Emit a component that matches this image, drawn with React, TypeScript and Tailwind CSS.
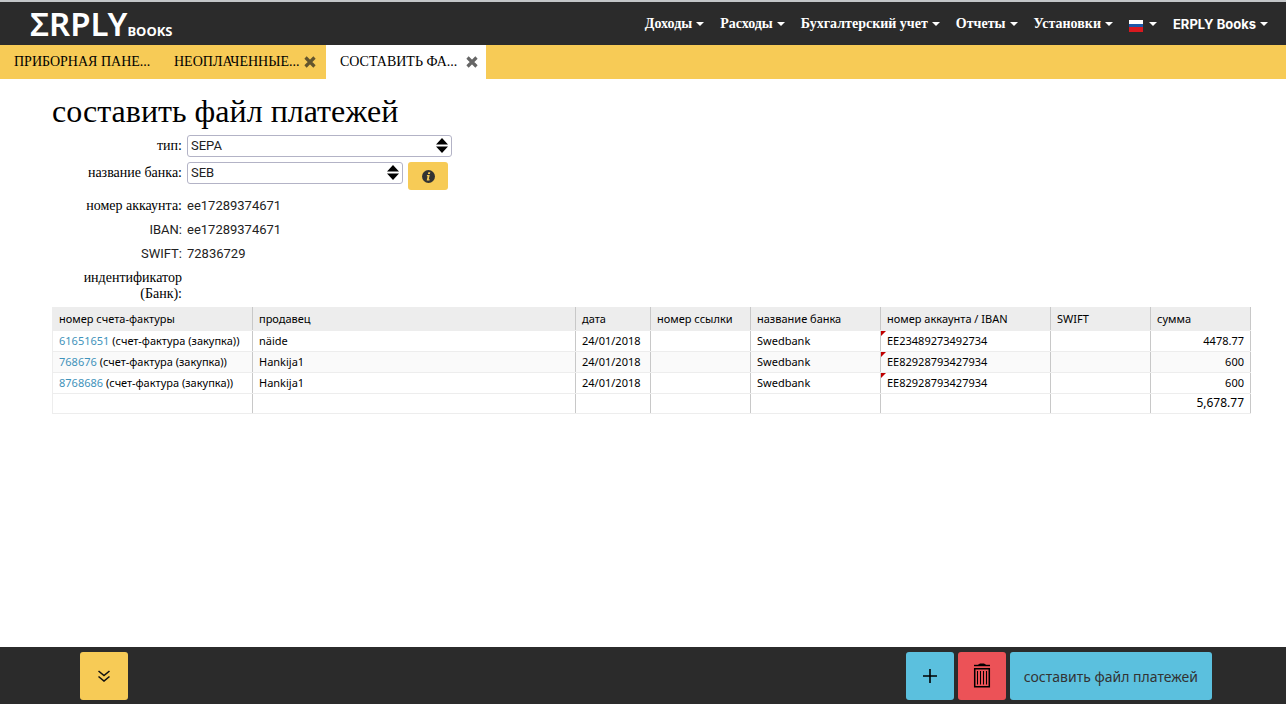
import type { ReactNode } from "react";

const menuItems = ["Доходы", "Расходы", "Бухгалтерский учет", "Отчеты", "Установки"];

const columns = [
  { title: "номер счета-фактуры", width: "w-[200px]" },
  { title: "продавец", width: "w-auto" },
  { title: "дата", width: "w-[75px]" },
  { title: "номер ссылки", width: "w-[100px]" },
  { title: "название банка", width: "w-[130px]" },
  { title: "номер аккаунта / IBAN", width: "w-[170px]" },
  { title: "SWIFT", width: "w-[100px]" },
  { title: "сумма", width: "w-[100px]" },
];

const invoices = [
  { number: "61651651", vendor: "näide", date: "24/01/2018", bank: "Swedbank", iban: "EE23489273492734", sum: "4478.77" },
  { number: "768676", vendor: "Hankija1", date: "24/01/2018", bank: "Swedbank", iban: "EE82928793427934", sum: "600" },
  { number: "8768686", vendor: "Hankija1", date: "24/01/2018", bank: "Swedbank", iban: "EE82928793427934", sum: "600" },
];

const cell = "border-r border-r-[#c8c8c8] border-b border-b-[#ededed] px-1.5";

function Caret() {
  return (
    <svg width="8" height="4" viewBox="0 0 8 4" className="mt-px" aria-hidden="true">
      <path d="M0 0h8L4 4z" fill="currentColor" />
    </svg>
  );
}

function CloseIcon() {
  return (
    <svg width="12" height="12" viewBox="0 0 12 12" aria-hidden="true">
      <path d="M1.5 1.5l9 9M10.5 1.5l-9 9" stroke="currentColor" strokeWidth="3.2" />
    </svg>
  );
}

function Flag() {
  return (
    <svg width="14" height="12" viewBox="0 0 14 12" className="mt-1" aria-label="Русский">
      <path d="M0 0h14v4H0z" fill="#fff" />
      <path d="M0 4h14v3H0z" fill="#1c57a7" />
      <path d="M0 7h14v5H0z" fill="#d8191f" />
    </svg>
  );
}

function Select({ id, value, width }: { id: string; value: string; width: string }) {
  return (
    <div className={`relative ${width}`}>
      <select
        id={id}
        className="block h-[22px] w-full appearance-none rounded-[3px] border border-[#b3b3c6] bg-white pl-[3px] text-[13px] leading-5 text-[#222] font-['Roboto',sans-serif]"
      >
        <option>{value}</option>
      </select>
      <svg width="12" height="15" viewBox="0 0 12 15" className="pointer-events-none absolute right-1 top-[3px]" aria-hidden="true">
        <path d="M6 0l6 6.500H0zM0 8.500h12L6 15z" fill="#000" />
      </svg>
    </div>
  );
}

function InfoRow({ label, sans, children }: { label: string; sans?: boolean; children?: ReactNode }) {
  return (
    <div className="flex">
      <dt
        className={`w-[130px] shrink-0 text-right leading-4 ${sans ? "text-[13px] text-[#222] font-['Roboto',sans-serif]" : "text-[14px]"}`}
      >
        {label}
      </dt>
      <dd className="ml-[5px] text-[13px] leading-4 text-[#222] font-['Roboto',sans-serif]">{children}</dd>
    </div>
  );
}

function Navbar() {
  return (
    <header className="flex h-[45px] items-center justify-between border-t-2 border-t-[#c3c6c8] bg-[#2b2b2b] pl-[30px] pr-[18px] text-white">
      <a href="#" className="block whitespace-nowrap text-[33px] leading-[43px] font-semibold font-['Noto_Sans',sans-serif]">
        ΣRPLY<span className="text-[13px] leading-none font-bold">BOOKS</span>
      </a>
      <nav className="flex items-center gap-4 text-[14px] leading-5 font-bold font-['Liberation_Serif',serif]">
        {menuItems.map((item) => (
          <button key={item} className="flex items-center gap-1">
            {item}
            <Caret />
          </button>
        ))}
        <button className="flex items-center gap-1.5">
          <Flag />
          <Caret />
        </button>
        <button className="flex items-center gap-1 text-[13px] font-['Inter',sans-serif]">
          ERPLY Books
          <Caret />
        </button>
      </nav>
    </header>
  );
}

function Tabs() {
  return (
    <div className="flex h-[34px] bg-[#f7cb56] text-[14px] leading-[34px]">
      <button className="w-40 pl-3.5 text-left">ПРИБОРНАЯ ПАНЕ...</button>
      <div className="flex w-[166px] items-center justify-between pl-3.5 pr-2.5">
        <button>НЕОПЛАЧЕННЫЕ...</button>
        <button aria-label="Закрыть" className="text-[#63552d]">
          <CloseIcon />
        </button>
      </div>
      <div className="flex w-40 items-center justify-between bg-white pl-3.5 pr-2">
        <button>СОСТАВИТЬ ФА...</button>
        <button aria-label="Закрыть" className="text-[#666]">
          <CloseIcon />
        </button>
      </div>
    </div>
  );
}

function InvoiceTable() {
  return (
    <table className="mt-[5px] w-full table-fixed border-collapse border-l border-l-[#ededed] text-left text-[11px] leading-4 font-['Noto_Sans',sans-serif]">
      <thead>
        <tr className="h-[23px] bg-[#ededed]">
          {columns.map((column) => (
            <th key={column.title} className={`${cell} ${column.width} pt-0.5 font-normal`}>
              {column.title}
            </th>
          ))}
        </tr>
      </thead>
      <tbody>
        {invoices.map((invoice) => (
          <tr key={invoice.number} className="h-[21px] even:bg-[#fafafa]">
            <td className={`${cell} whitespace-nowrap`}>
              <a href="#" className="text-[#3f93bb]">{invoice.number}</a> (счет-фактура (закупка))
            </td>
            <td className={cell}>{invoice.vendor}</td>
            <td className={cell}>{invoice.date}</td>
            <td className={cell}></td>
            <td className={cell}>{invoice.bank}</td>
            <td className={`${cell} relative`}>
              <svg width="5" height="5" viewBox="0 0 5 5" className="absolute left-0 top-0" aria-hidden="true">
                <path d="M0 0h5L0 5z" fill="#c00000" />
              </svg>
              {invoice.iban}
            </td>
            <td className={cell}></td>
            <td className={`${cell} text-right`}>{invoice.sum}</td>
          </tr>
        ))}
        <tr className="h-5">
          {columns.slice(1).map((column) => (
            <td key={column.title} className={cell}></td>
          ))}
          <td className={`${cell} text-right text-[12px]`}>5,678.77</td>
        </tr>
      </tbody>
    </table>
  );
}

function ActionBar() {
  return (
    <footer className="flex h-[57px] items-start justify-between bg-[#2b2b2b] pl-20 pr-[74px] pt-[5px]">
      <button aria-label="Свернуть" className="flex size-12 items-center justify-center rounded-[3px] bg-[#f7cb56]">
        <svg width="12" height="12" viewBox="0 0 12 12" fill="none" stroke="#111" strokeWidth="1.6" aria-hidden="true">
          <path d="M0.5 1l5.5 4.5L11.5 1M0.5 6.5L6 11l5.5-4.5" />
        </svg>
      </button>
      <div className="flex gap-1">
        <button aria-label="Добавить" className="flex size-12 items-center justify-center rounded-[3px] bg-[#5bc0de]">
          <svg width="14" height="14" viewBox="0 0 14 14" stroke="#000" strokeWidth="1.6" aria-hidden="true">
            <path d="M7 0v14M0 7h14" />
          </svg>
        </button>
        <button aria-label="Удалить" className="flex size-12 items-center justify-center rounded-[3px] bg-[#ec5257]">
          <svg width="18" height="26" viewBox="0 0 18 26" fill="none" stroke="#000" aria-hidden="true">
            <path d="M4 2.5L7 0.5h4l3 2z" fill="#000" stroke="none" />
            <path d="M1 2.5h16" strokeWidth="1.4" />
            <path d="M1.7 5.700h14.600v18h-14.600z" strokeWidth="1.5" />
            <path d="M4.500 8v13.500M7.500 8v13.500M10.500 8v13.500M13.500 8v13.500" strokeWidth="1" />
          </svg>
        </button>
        <button className="h-12 rounded-[3px] bg-[#5bc0de] px-3.5 text-[14px] text-[#333] font-['Noto_Sans',sans-serif]">
          составить файл платежей
        </button>
      </div>
    </footer>
  );
}

export default function App() {
  return (
    <div className="flex min-h-screen flex-col bg-white text-black font-['Liberation_Serif',serif]">
      <Navbar />
      <Tabs />
      <main className="flex-1 pl-[52px] pr-[35px] pt-3">
        <h1 className="text-[32px] leading-10">составить файл платежей</h1>
        <form className="mt-1 flex flex-col gap-[5px] text-[14px] leading-[22px]">
          <div className="flex gap-[5px]">
            <label htmlFor="type" className="w-[130px] text-right">тип:</label>
            <Select id="type" value="SEPA" width="w-[265px]" />
          </div>
          <div className="flex gap-[5px]">
            <label htmlFor="bank" className="w-[130px] text-right">название банка:</label>
            <Select id="bank" value="SEB" width="w-[216px]" />
            <button type="button" aria-label="Информация" className="flex h-7 w-10 items-center justify-center rounded-[3px] bg-[#f7cb56]">
              <svg width="13" height="13" viewBox="0 0 13 13" aria-hidden="true">
                <circle cx="6.5" cy="6.5" r="6.5" fill="#333" />
                <path d="M6.3 2.2h2l-.4 1.7h-2zM5 5h2.7L6.8 9.3h.9l-.2 1.2H4.7L5.6 6.200H4.800z" fill="#f7cb56" />
              </svg>
            </button>
          </div>
        </form>
        <dl className="mt-2 flex flex-col gap-2">
          <InfoRow label="номер аккаунта:">ee17289374671</InfoRow>
          <InfoRow label="IBAN:" sans>ee17289374671</InfoRow>
          <InfoRow label="SWIFT:" sans>72836729</InfoRow>
          <InfoRow label="индентификатор (Банк):" />
        </dl>
        <InvoiceTable />
      </main>
      <ActionBar />
    </div>
  );
}
